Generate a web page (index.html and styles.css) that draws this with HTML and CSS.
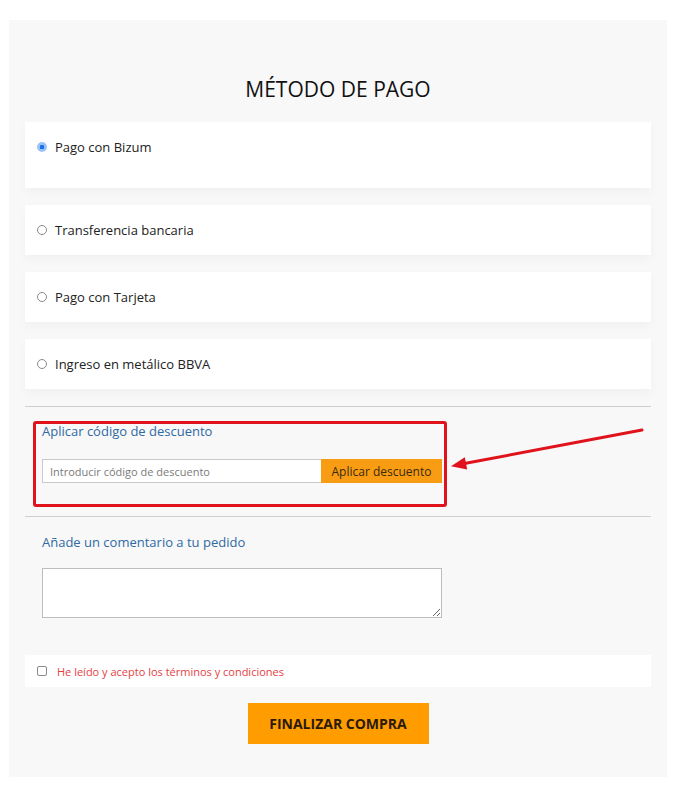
FILE: index.html
```html
<!DOCTYPE html>
<html lang="es">
<head>
<meta charset="utf-8">
<title>Método de pago</title>
<link rel="stylesheet" href="styles.css">
</head>
<body>
<div class="page">
  <div class="panel">
    <h2 class="title">MÉTODO DE PAGO</h2>

    <label class="card card-first">
      <span class="radio checked"></span>
      <span class="label">Pago con Bizum</span>
    </label>
    <label class="card">
      <span class="radio"></span>
      <span class="label">Transferencia bancaria</span>
    </label>
    <label class="card">
      <span class="radio"></span>
      <span class="label">Pago con Tarjeta</span>
    </label>
    <label class="card">
      <span class="radio"></span>
      <span class="label">Ingreso en metálico BBVA</span>
    </label>

    <div class="section discount">
      <div class="link">Aplicar código de descuento</div>
      <div class="code-row">
        <input class="code-input" type="text" placeholder="Introducir código de descuento">
        <button class="code-btn" type="button">Aplicar descuento</button>
      </div>
      <div class="highlight"></div>
      <svg class="arrow" width="205" height="55" viewBox="0 0 205 55">
        <line x1="197" y1="10" x2="18" y2="43.8" stroke="#e0121b" stroke-width="3" stroke-linecap="round"/>
        <polygon points="6,46.2 22.2,49.6 19.8,37.2" fill="#e0121b"/>
      </svg>
    </div>

    <div class="section comment">
      <div class="link">Añade un comentario a tu pedido</div>
      <textarea class="comment-box"></textarea>
    </div>

    <label class="terms">
      <span class="check"></span>
      <span class="terms-text">He leído y acepto los términos y condiciones</span>
    </label>

    <div class="actions">
      <button class="finish" type="button">FINALIZAR COMPRA</button>
    </div>
  </div>
</div>
</body>
</html>
```

FILE: styles.css
```css
* { box-sizing: border-box; }

html, body {
  margin: 0;
  padding: 0;
  background: #ffffff;
  font-family: "Open Sans", "Noto Sans", "Liberation Sans", sans-serif;
}

.page {
  padding: 20px 9px 0;
}

.panel {
  background: #f8f8f8;
  padding: 55px 16px 33px;
}

.title {
  margin: 0 0 19px;
  text-align: center;
  font-size: 21px;
  line-height: 28px;
  font-weight: 400;
  color: #111;
}

.card {
  display: flex;
  align-items: center;
  gap: 8px;
  background: #ffffff;
  padding: 15px 12px;
  margin-bottom: 17px;
  box-shadow: 0 4px 10px rgba(0, 0, 0, 0.035);
  cursor: pointer;
}

.card-first {
  align-items: flex-start;
  padding-bottom: 31px;
}

.card-first .radio { margin-top: 5px; }

.radio {
  width: 10px;
  height: 10px;
  border-radius: 50%;
  border: 1px solid #8a8a8a;
  background: #fff;
  flex: none;
}

.radio.checked {
  border: 2px solid #9cc3f5;
  background: #1a73e8;
  box-shadow: inset 0 0 0 0.5px #fff;
}

.label {
  font-size: 13px;
  line-height: 20px;
  color: #222;
}

.section {
  position: relative;
  border-top: 1px solid #cfcfcf;
  padding-left: 17px;
}

.discount {
  padding-top: 14px;
  padding-bottom: 33px;
}

.comment {
  padding-top: 15px;
}

.link {
  font-size: 13px;
  line-height: 20px;
  color: #2f6aa3;
}

.code-row {
  display: flex;
  margin-top: 18px;
  width: 400px;
  height: 24px;
}

.code-input {
  flex: 1;
  min-width: 0;
  height: 24px;
  border: 1px solid #c9c9c9;
  border-right: none;
  background: #fff;
  padding: 0 7px;
  font-family: inherit;
  font-size: 11px;
  color: #333;
  outline: none;
}

.code-input::placeholder { color: #7a7a7a; }

.code-btn {
  width: 121px;
  height: 24px;
  border: none;
  background: #f79c13;
  color: #3b2a10;
  font-family: inherit;
  font-size: 12px;
  padding: 0;
}

.highlight {
  position: absolute;
  left: 8px;
  top: 14px;
  width: 414px;
  height: 86px;
  border: 3px solid #e0121b;
  border-radius: 3px;
  pointer-events: none;
}

.arrow {
  position: absolute;
  left: 420px;
  top: 13px;
}

.comment-box {
  display: block;
  margin-top: 16px;
  width: 400px;
  height: 50px;
  border: 1px solid #bdbdbd;
  background: #fff;
  font-family: inherit;
  font-size: 12px;
}

.terms {
  display: flex;
  align-items: center;
  gap: 10px;
  margin-top: 37px;
  height: 32px;
  background: #fff;
  padding-left: 12px;
}

.check {
  width: 10px;
  height: 10px;
  border: 1px solid #8a8a8a;
  border-radius: 2px;
  background: #fff;
  flex: none;
}

.terms-text {
  font-size: 11px;
  color: #e53e43;
}

.actions {
  display: flex;
  justify-content: center;
  margin-top: 16px;
}

.finish {
  width: 181px;
  height: 41px;
  border: none;
  background: #ff9c00;
  color: #2b1a0a;
  font-family: inherit;
  font-weight: 700;
  font-size: 14px;
  letter-spacing: 0;
  padding: 0;
}
```
